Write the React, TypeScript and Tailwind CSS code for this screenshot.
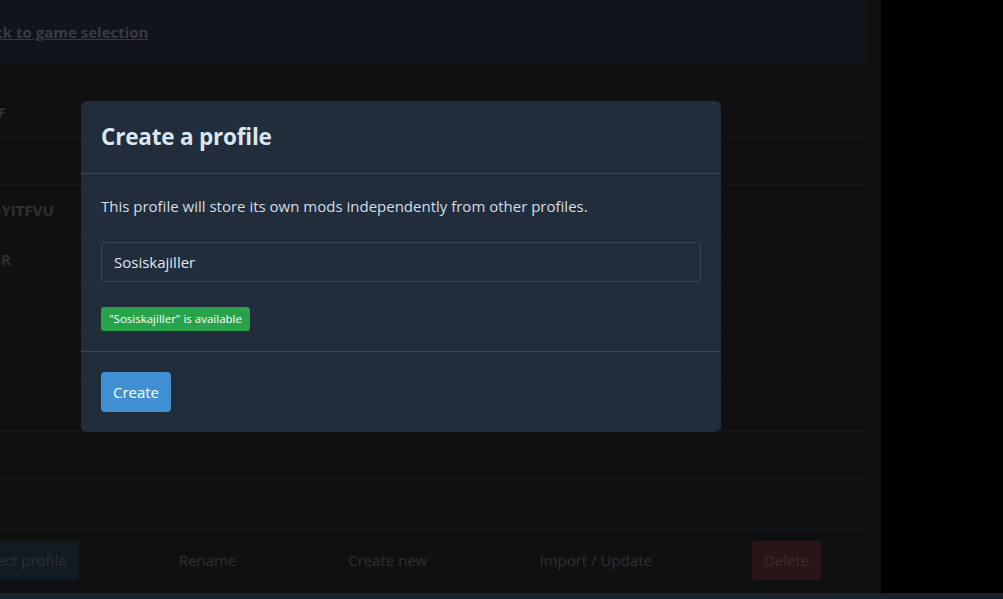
import React from "react";

const font = { fontFamily: '"Open Sans", "Noto Sans", Arial, sans-serif' };

const rows = ["ASDF", "Tv", "HDGYITFVU", "WASR", "", "", "", "", ""];

function ProfileRow({ name }: { name: string }) {
  return (
    <div className="h-[49px] border-b border-[#16181b] flex items-center">
      <span className="ml-[-32px] text-[15px] font-bold text-[#2d3137] whitespace-nowrap">{name}</span>
    </div>
  );
}

function CreateProfileModal() {
  return (
    <div className="absolute left-[81px] top-[101px] w-[640px] bg-[#212d3b] rounded-[6px] flex flex-col">
      <div className="h-[73px] px-5 flex items-center border-b border-[#3b4856]">
        <h2 className="text-[22.5px] font-bold text-[#dbe6f3] tracking-[-0.2px]">Create a profile</h2>
      </div>
      <div className="px-5 pt-[21px] pb-[20px] flex flex-col">
        <p className="text-[15px] text-[#d4dde8] leading-[22px]">
          This profile will store its own mods independently from other profiles.
        </p>
        <input
          readOnly
          value="Sosiskajiller"
          className="mt-[25px] h-[40px] w-full rounded-[4px] border border-[#3a4757] bg-[#212d3b] px-3 text-[15px] text-[#e0e6ee] outline-none"
          style={font}
        />
        <div className="mt-[25px] flex">
          <span className="h-[24px] px-[8px] flex items-center rounded-[3px] bg-[#28a34c] text-[11.5px] text-white">
            "Sosiskajiller" is available
          </span>
        </div>
      </div>
      <div className="border-t border-[#3b4856] p-5">
        <button className="h-[40px] w-[70px] rounded-[4px] bg-[#3f8fd3] text-[15px] text-white">
          Create
        </button>
      </div>
    </div>
  );
}

export default function App() {
  return (
    <div className="relative w-[1003px] h-[599px] overflow-hidden bg-black flex flex-col" style={font}>
      <div className="flex h-[593px]">
        <div className="w-[881px] bg-[#0f1012] flex flex-col">
          <div className="w-[865px] h-[64px] bg-[#11141b] flex items-center">
            <span className="ml-[-24px] text-[15px] font-bold underline text-[#363b44] whitespace-nowrap">
              Back to game selection
            </span>
          </div>
          <div className="w-[865px] pt-[24px] flex flex-col">
            {rows.map((r, i) => (
              <ProfileRow key={i} name={r} />
            ))}
          </div>
          <div className="w-[865px] mt-[12px] flex items-center gap-[88px] ml-[-36px]">
            <button className="h-[39px] px-3 rounded-[4px] bg-[#131b22] text-[15px] text-[#2c3036] whitespace-nowrap">
              Select profile
            </button>
            <button className="h-[39px] px-3 text-[15px] text-[#2c3036]">Rename</button>
            <button className="h-[39px] px-3 text-[15px] text-[#2c3036] whitespace-nowrap">Create new</button>
            <button className="h-[39px] px-3 text-[15px] text-[#2c3036] whitespace-nowrap">Import / Update</button>
            <button className="h-[39px] px-3 rounded-[4px] bg-[#2b1418] text-[15px] text-[#45272b]">
              Delete
            </button>
          </div>
        </div>
        <div className="flex-1 bg-black" />
      </div>
      <div className="h-[6px] bg-[#18222d]" />
      <CreateProfileModal />
    </div>
  );
}
